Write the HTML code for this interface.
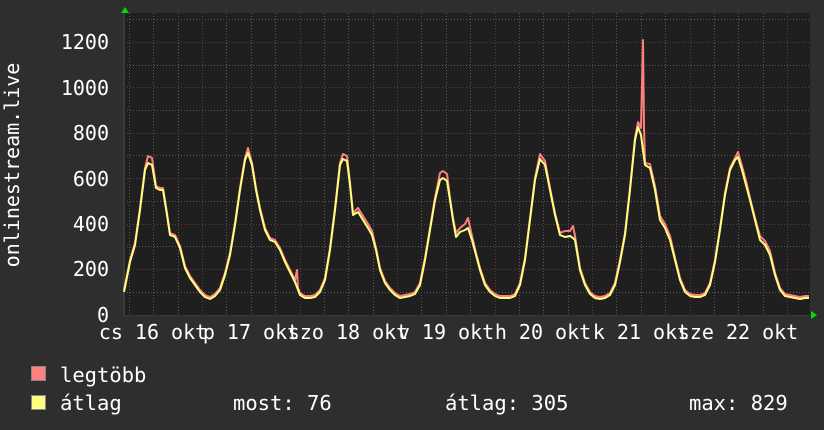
<!DOCTYPE html>
<html><head><meta charset="utf-8"><style>
html,body{margin:0;padding:0;background:#2e2e2e;}
svg{display:block}
text{font-family:"DejaVu Sans Mono","Liberation Mono",monospace;fill:#fff}
</style></head><body>
<svg width="824" height="430" viewBox="0 0 824 430" xmlns="http://www.w3.org/2000/svg">
<rect width="824" height="430" fill="#2e2e2e"/>
<rect x="124" y="13" width="686" height="302" fill="#1f1f1f"/>
<g stroke="#5a5a5a" stroke-width="1" stroke-dasharray="1,2">
<line x1="124" x2="810" y1="292.5" y2="292.5"/><line x1="124" x2="810" y1="246.5" y2="246.5"/>
<line x1="124" x2="810" y1="201.5" y2="201.5"/><line x1="124" x2="810" y1="155.5" y2="155.5"/>
<line x1="124" x2="810" y1="110.5" y2="110.5"/><line x1="124" x2="810" y1="65.5" y2="65.5"/>
<line x1="124" x2="810" y1="19.5" y2="19.5"/>
<line x1="153.5" x2="153.5" y1="13" y2="315"/><line x1="178.5" x2="178.5" y1="13" y2="315"/>
<line x1="226.5" x2="226.5" y1="13" y2="315"/><line x1="251.5" x2="251.5" y1="13" y2="315"/><line x1="275.5" x2="275.5" y1="13" y2="315"/>
<line x1="324.5" x2="324.5" y1="13" y2="315"/><line x1="348.5" x2="348.5" y1="13" y2="315"/><line x1="373.5" x2="373.5" y1="13" y2="315"/>
<line x1="421.5" x2="421.5" y1="13" y2="315"/><line x1="446.5" x2="446.5" y1="13" y2="315"/><line x1="470.5" x2="470.5" y1="13" y2="315"/>
<line x1="519.5" x2="519.5" y1="13" y2="315"/><line x1="543.5" x2="543.5" y1="13" y2="315"/><line x1="568.5" x2="568.5" y1="13" y2="315"/>
<line x1="616.5" x2="616.5" y1="13" y2="315"/><line x1="641.5" x2="641.5" y1="13" y2="315"/><line x1="665.5" x2="665.5" y1="13" y2="315"/>
<line x1="714.5" x2="714.5" y1="13" y2="315"/><line x1="738.5" x2="738.5" y1="13" y2="315"/><line x1="763.5" x2="763.5" y1="13" y2="315"/>
<line x1="129.5" x2="129.5" y1="13" y2="315"/>
</g>
<g stroke="#6a3a3a" stroke-width="1" stroke-dasharray="1,2">
<line x1="124" x2="810" y1="269.5" y2="269.5"/><line x1="124" x2="810" y1="224.5" y2="224.5"/>
<line x1="124" x2="810" y1="178.5" y2="178.5"/><line x1="124" x2="810" y1="133.5" y2="133.5"/>
<line x1="124" x2="810" y1="87.5" y2="87.5"/><line x1="124" x2="810" y1="42.5" y2="42.5"/>
<line x1="202.5" x2="202.5" y1="13" y2="315"/><line x1="300.5" x2="300.5" y1="13" y2="315"/>
<line x1="397.5" x2="397.5" y1="13" y2="315"/><line x1="495.5" x2="495.5" y1="13" y2="315"/>
<line x1="592.5" x2="592.5" y1="13" y2="315"/><line x1="690.5" x2="690.5" y1="13" y2="315"/><line x1="787.5" x2="787.5" y1="13" y2="315"/>
</g>
<line x1="124" x2="124" y1="10" y2="316" stroke="#3a3a3a" stroke-width="2"/>
<line x1="123" x2="812" y1="315.5" y2="315.5" stroke="#3a3a3a" stroke-width="1"/>
<polygon points="121,13 129,13 125,7" fill="#00dd00"/>
<polygon points="811,311 811,319 817,315" fill="#00dd00"/>
<g fill="none" stroke-linejoin="round" stroke-width="2">
<polyline stroke="#ff7f7f" transform="translate(0,-2)" points="124,292 130,262 135,245 140,210 145,170 148,158 152,160 156,188 160,190 163,190 167,215 170,235 175,237 180,248 185,268 190,278 195,285 200,292 205,297 210,299 215,296 220,290 225,275 230,255 235,225 240,190 245,160 248,150 252,165 256,190 260,210 265,230 270,240 275,242 280,250 285,262 290,272 295,282 297,272 298,290 300,295 305,298 310,298 315,297 320,292 325,280 330,250 335,210 340,165 343,156 347,158 350,185 353,215 358,210 363,218 368,226 372,233 376,250 380,270 385,283 390,290 395,295 400,298 405,297 410,296 415,294 420,285 425,260 430,230 435,200 440,175 443,173 447,176 450,200 453,220 456,235 460,230 465,226 468,220 472,238 476,255 480,270 485,285 490,292 495,296 500,298 505,298 510,298 515,296 520,285 525,260 530,220 535,180 540,156 545,163 550,190 555,215 560,235 565,233 570,233 573,228 575,238 580,270 585,285 590,294 595,298 600,299 605,298 610,295 615,285 620,262 625,235 630,190 635,140 638,124 641,130 643,42 644,130 645,165 650,166 655,188 660,218 665,226 670,238 675,260 680,280 685,292 690,296 695,297 700,297 705,295 710,285 715,262 720,230 725,195 730,170 735,160 738,154 742,168 746,183 750,200 755,220 760,238 765,243 770,253 775,275 780,290 785,296 790,297 795,298 800,299 805,298 809,298"/>
<polyline stroke="#ffff7f" points="124,292 130,262 135,245 140,210 145,170 148,163 152,165 156,188 160,190 163,190 167,215 170,235 175,237 180,248 185,268 190,278 195,285 200,292 205,297 210,299 215,296 220,290 225,275 230,255 235,225 240,190 245,160 248,153 252,165 256,190 260,210 265,230 270,240 275,242 280,250 285,262 290,272 295,282 300,295 305,298 310,298 315,297 320,292 325,280 330,250 335,210 340,165 343,159 347,161 350,185 353,215 358,212 363,220 368,228 372,235 376,250 380,270 385,283 390,290 395,295 400,298 405,297 410,296 415,294 420,285 425,260 430,230 435,200 440,180 443,178 447,181 450,200 453,220 456,237 460,232 465,230 468,228 472,240 476,255 480,270 485,285 490,292 495,296 500,298 505,298 510,298 515,296 520,285 525,260 530,220 535,180 540,159 545,165 550,190 555,215 560,235 565,237 570,236 573,238 575,240 580,270 585,285 590,294 595,298 600,299 605,298 610,295 615,285 620,262 625,235 630,190 635,140 638,127 641,135 645,165 650,168 655,190 660,220 665,228 670,240 675,260 680,280 685,292 690,296 695,297 700,297 705,295 710,285 715,262 720,230 725,195 730,170 735,160 738,157 742,170 746,185 750,200 755,220 760,240 765,245 770,255 775,275 780,290 785,296 790,297 795,298 800,299 805,298 809,298"/>
</g>
<g font-size="20" text-anchor="end">
<text x="109" y="322">0</text><text x="109" y="276">200</text><text x="109" y="231">400</text>
<text x="109" y="186">600</text><text x="109" y="140">800</text><text x="109" y="95">1000</text><text x="109" y="49">1200</text>
</g>
<text font-size="20" transform="translate(19,165) rotate(-90)" text-anchor="middle">onlinestream.live</text>
<g font-size="20" text-anchor="middle">
<text x="153" y="339">cs 16 okt</text><text x="251" y="339">p 17 okt</text><text x="348" y="339">szo 18 okt</text>
<text x="446" y="339">v 19 okt</text><text x="543" y="339">h 20 okt</text><text x="641" y="339">k 21 okt</text><text x="738" y="339">sze 22 okt</text>
</g>
<rect x="31.5" y="366.5" width="14" height="14" fill="#ff7f7f" stroke="#888"/>
<rect x="31.5" y="395.5" width="14" height="14" fill="#ffff7f" stroke="#888"/>
<g font-size="20.5">
<text x="60" y="382">legtöbb</text><text x="60" y="410">átlag</text>
<text x="233" y="410">most: 76</text><text x="445" y="410">átlag: 305</text><text x="689" y="410">max: 829</text>
</g>
</svg>
</body></html>
